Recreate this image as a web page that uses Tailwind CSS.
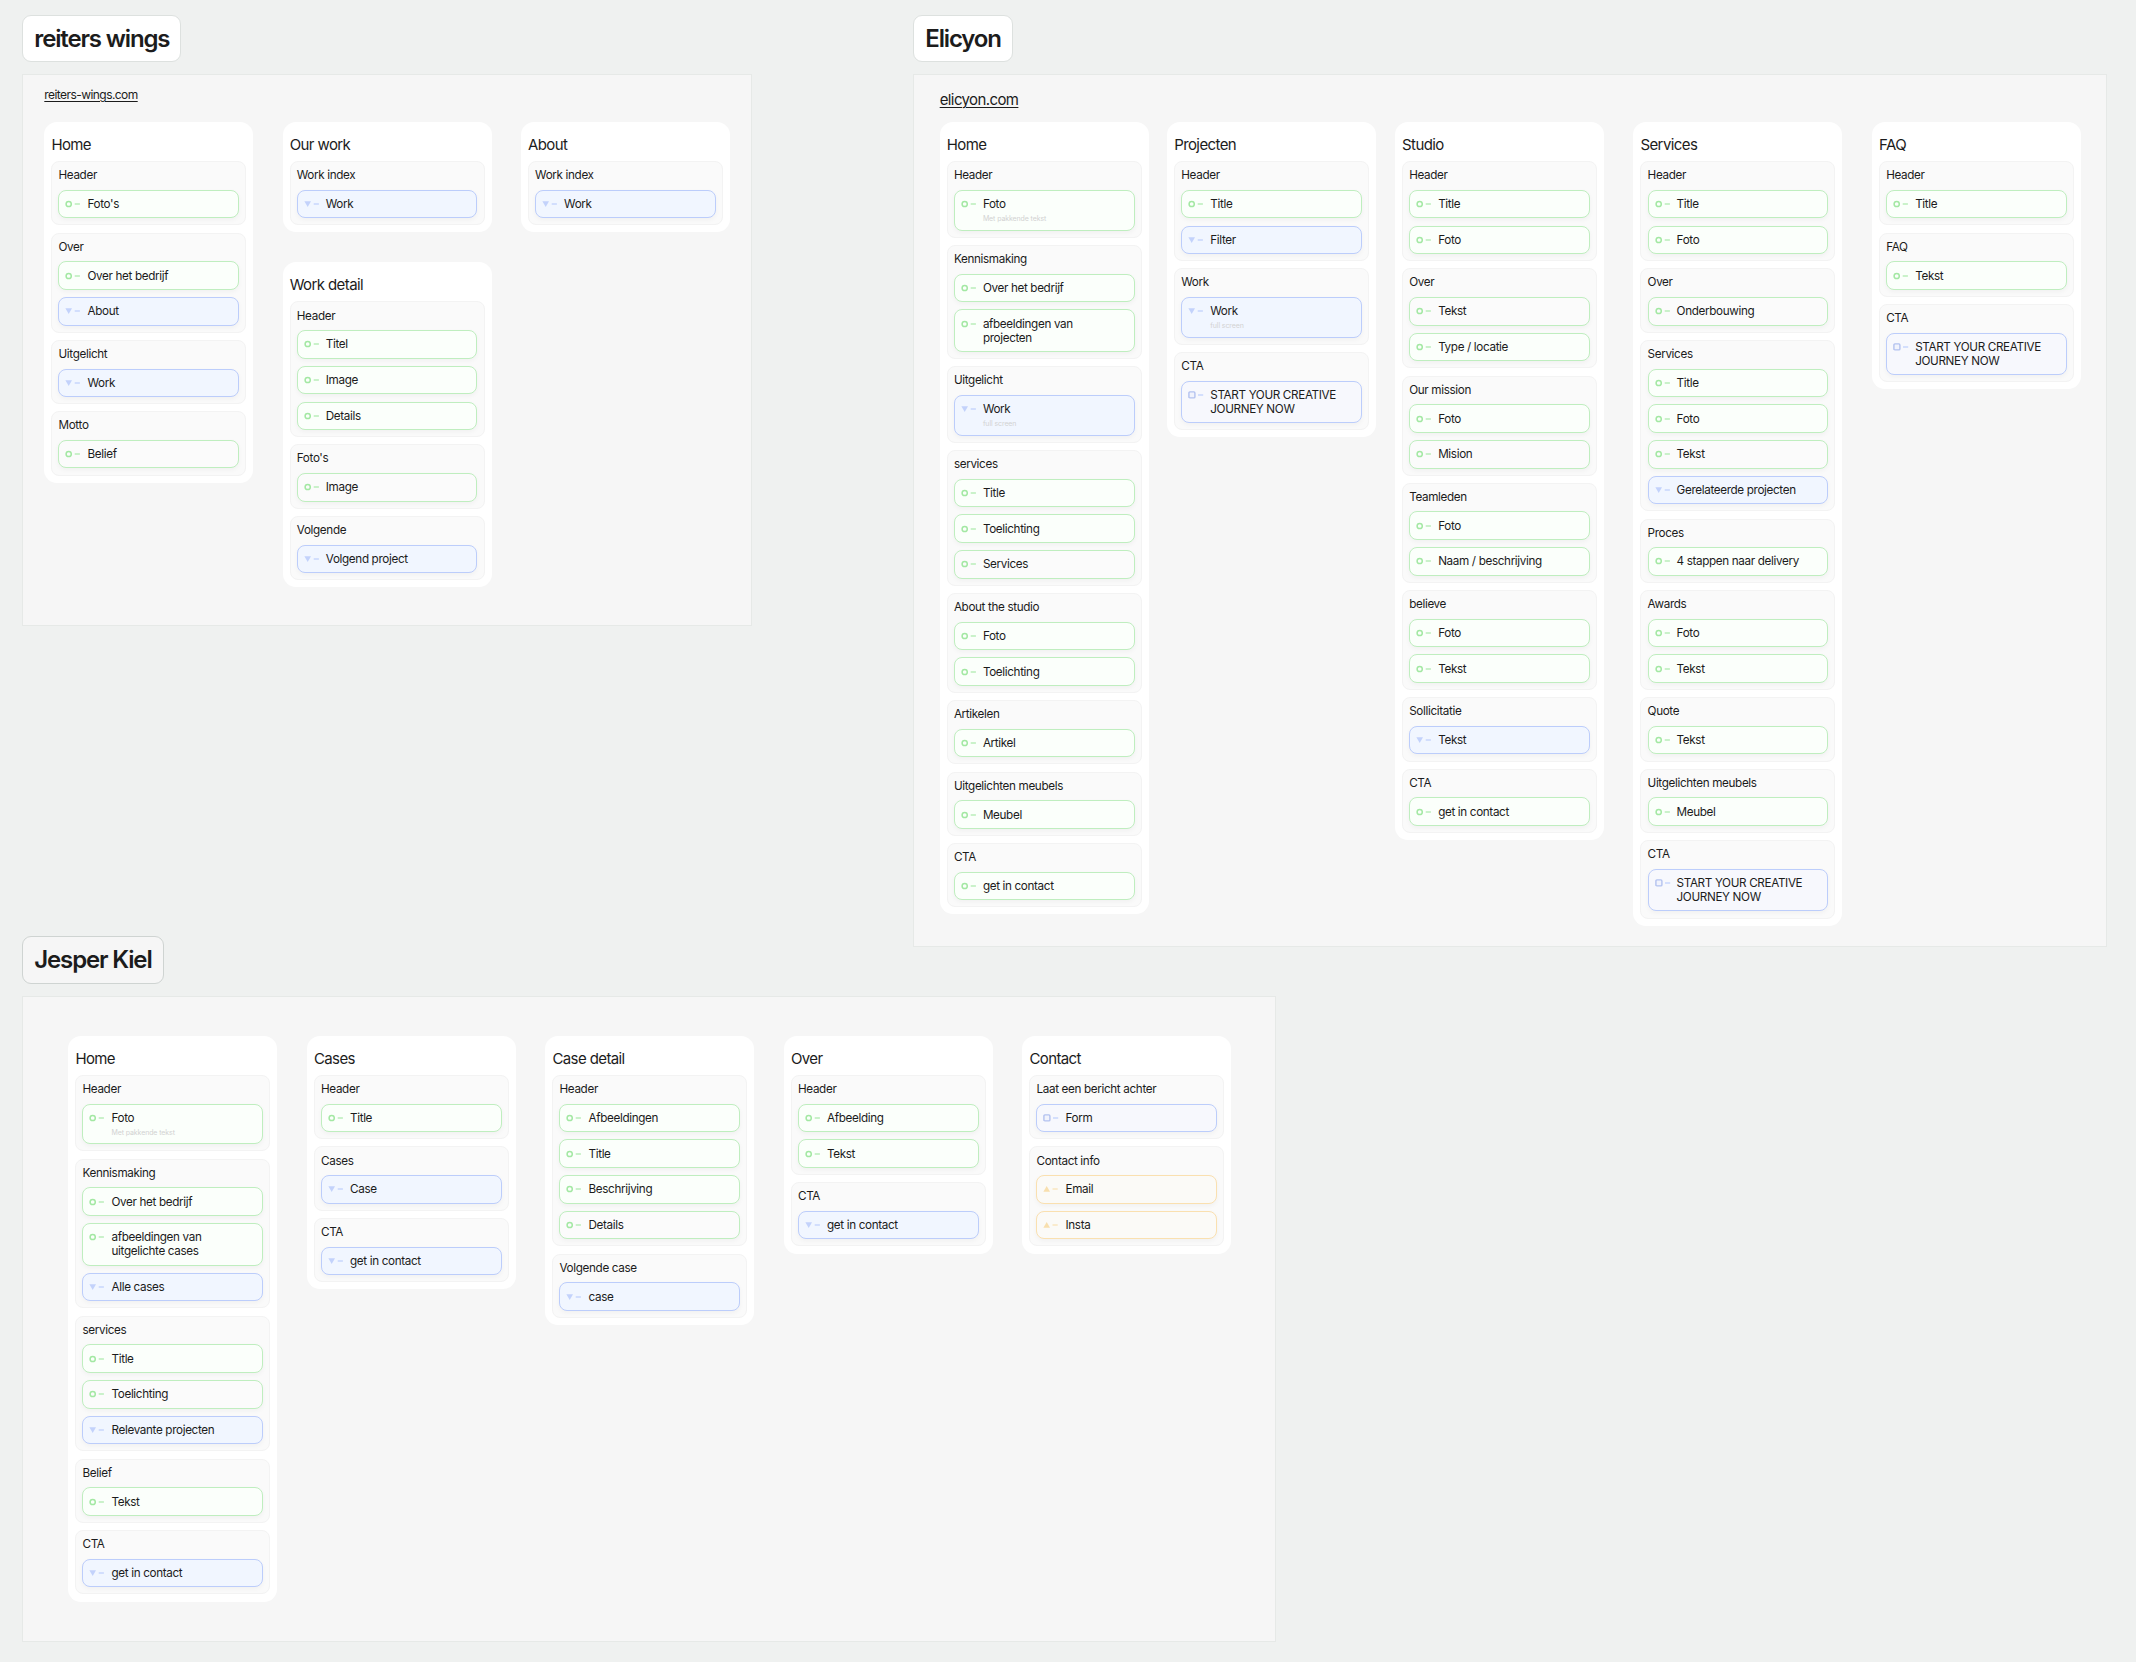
<!doctype html>
<html lang="nl">
<head>
<meta charset="utf-8">
<title>Sitemaps</title>
<script src="https://cdn.jsdelivr.net/npm/@tailwindcss/browser@4"></script>
</head>
<body class="bg-[#eff1f0] font-['Inter',sans-serif] text-[#1c1c1c]">
<div class="flex w-[2136px] h-[1662px] items-start pt-[15px] pl-[22.3px] overflow-hidden">
  <div class="flex flex-col items-start w-[891px] shrink-0">
    <h1 class="h-[47.3px] flex items-center px-[11px] bg-white border border-[#dde1df] rounded-[9px] text-[24px] tracking-[-1.15px] font-semibold leading-none">reiters wings</h1>
    <section class="mt-[12px] w-[729.5px] h-[552px] bg-[#f6f6f6] border border-[#e6e9e7] pl-[21px]">
      <div class="h-[46.5px] pt-[12.5px]"><a class="block text-[12px] tracking-[-0.56px] leading-[14.3px] underline underline-offset-2 decoration-[0.8px]">reiters-wings.com</a></div>
      <div class="flex items-start gap-[29.3px]" id="f1"></div>
    </section>
    <h1 class="mt-[310px] h-[47.3px] flex items-center px-[11px] bg-[#f6f6f6] border border-[#cfd4d2] rounded-[9px] text-[24px] tracking-[-1.15px] font-semibold leading-none">Jesper Kiel</h1>
    <section class="mt-[12px] w-[1254px] h-[646px] shrink-0 bg-[#f6f6f6] border border-[#e6e9e7] pl-[45px] pt-[39px]">
      <div class="flex items-start gap-[29.5px]" id="f3"></div>
    </section>
  </div>
  <div class="flex flex-col items-start w-[1193.4px] shrink-0">
    <h1 class="h-[47.3px] flex items-center px-[11px] bg-white border border-[#dde1df] rounded-[9px] text-[24px] tracking-[-1.15px] font-semibold leading-none">Elicyon</h1>
    <section class="mt-[12px] w-[1193.4px] h-[873px] bg-[#f6f6f6] border border-[#e6e9e7] pl-[25.4px]">
      <div class="h-[46.5px] pt-[16.5px]"><a class="block text-[15px] tracking-[-0.6px] leading-[16px] underline underline-offset-2 decoration-[0.8px]">elicyon.com</a></div>
      <div class="flex items-start" id="f2"></div>
    </section>
  </div>
</div>
<script>
const ICONS = {
  g: '<circle cx="3.7" cy="4" r="2.6" fill="none" stroke="#a3e8a3" stroke-width="1.5"/><path d="M9.7 4h5.2" stroke="#b5ecb5" stroke-width="1.4"/>',
  b: '<path d="M.4 1.2h6.6L3.7 7z" fill="#c3d2fb"/><path d="M9.7 4h5.2" stroke="#c5d4fc" stroke-width="1.4"/>',
  s: '<rect x=".9" y=".9" width="6" height="6" rx="1" fill="#f1f3fc" stroke="#b3c2ef" stroke-width="1.4"/><path d="M10 4h5.2" stroke="#c5d4fc" stroke-width="1.4"/>',
  o: '<path d="M.4 6.8h6.6L3.7 1z" fill="#f8dfae"/><path d="M9.5 4h5.2" stroke="#f9e4bb" stroke-width="1.4"/>'
};
const ITEM = {
  g: 'border-[#bfeebf] bg-[#fbfffb]',
  G: 'border-[#bfeebf] bg-[#fbfbfb]',
  b: 'border-[#bccdfb] bg-[#f1f6ff]',
  s: 'border-[#bccdfb] bg-[#f7f8fd]',
  o: 'border-[#fae0b0] bg-[#fbfaf7]'
};
function item(spec){
  const [t, label, sub] = spec;
  const icon = ICONS[t === 'G' ? 'g' : t];
  const subEl = sub ? '<div class="h-[12.3px] text-[7px] tracking-[-0.1px] leading-[16.3px] text-[#d2d2d2]">' + sub + '</div>' : '';
  return '<div class="flex items-start rounded-[8px] border pl-[6px] pr-[16px] py-[6.25px] shadow-[0_2px_5px_rgba(0,0,0,0.04)] ' + ITEM[t] + '">' +
    '<svg class="w-[22px] h-[8px] mt-[3px] shrink-0" viewBox="0 0 22 8">' + icon + '</svg>' +
    '<div class="min-w-0"><div class="text-[11.7px] tracking-[-0.35px] leading-[14px]">' + label + '</div>' + subEl + '</div></div>';
}
function section(sec){
  return '<div class="flex flex-col gap-[7.25px] p-[6.1px] rounded-[8px] border border-[#f3f3f3] bg-[#fafafa]">' +
    '<div class="text-[11.7px] tracking-[-0.35px] leading-[14.3px]">' + sec[0] + '</div>' + sec.slice(1).map(item).join('') + '</div>';
}
function card(c, extra){
  return '<div class="w-[209px] shrink-0 flex flex-col gap-[7.25px] p-[7.1px] bg-white rounded-[13px] ' + (extra || '') + '">' +
    '<div class="text-[15px] tracking-[-0.6px] leading-[31px] h-[25px]">' + c[0] + '</div>' + c.slice(1).map(section).join('') + '</div>';
}
const g = (l, s) => ['g', l, s], G = l => ['G', l], b = (l, s) => ['b', l, s], s = l => ['s', l], o = l => ['o', l];
const START = 'START YOUR CREATIVE JOURNEY NOW';

const f1 = document.getElementById('f1');
f1.innerHTML =
  card(['Home', ['Header', g("Foto's")], ['Over', g('Over het bedrijf'), b('About')], ['Uitgelicht', b('Work')], ['Motto', G('Belief')]]) +
  '<div class="flex flex-col gap-[29.6px]">' +
  card(['Our work', ['Work index', b('Work')]]) +
  card(['Work detail', ['Header', g('Titel'), g('Image'), g('Details')], ["Foto's", G('Image')], ['Volgende', b('Volgend project')]]) +
  '</div>' +
  card(['About', ['Work index', b('Work')]]);

const f2 = document.getElementById('f2');
f2.innerHTML =
  card(['Home',
    ['Header', g('Foto', 'Met pakkende tekst')],
    ['Kennismaking', g('Over het bedrijf'), g('afbeeldingen van projecten')],
    ['Uitgelicht', b('Work', 'full screen')],
    ['services', g('Title'), g('Toelichting'), G('Services')],
    ['About the studio', g('Foto'), g('Toelichting')],
    ['Artikelen', g('Artikel')],
    ['Uitgelichten meubels', g('Meubel')],
    ['CTA', g('get in contact')]]) +
  card(['Projecten',
    ['Header', g('Title'), b('Filter')],
    ['Work', b('Work', 'full screen')],
    ['CTA', s(START)]], 'ml-[18.4px]') +
  card(['Studio',
    ['Header', g('Title'), g('Foto')],
    ['Over', G('Tekst'), g('Type / locatie')],
    ['Our mission', g('Foto'), G('Mision')],
    ['Teamleden', g('Foto'), g('Naam / beschrijving')],
    ['believe', g('Foto'), g('Tekst')],
    ['Sollicitatie', b('Tekst')],
    ['CTA', g('get in contact')]], 'ml-[18.9px]') +
  card(['Services',
    ['Header', g('Title'), g('Foto')],
    ['Over', G('Onderbouwing')],
    ['Services', g('Title'), g('Foto'), G('Tekst'), b('Gerelateerde projecten')],
    ['Proces', g('4 stappen naar delivery')],
    ['Awards', g('Foto'), g('Tekst')],
    ['Quote', g('Tekst')],
    ['Uitgelichten meubels', g('Meubel')],
    ['CTA', s(START)]], 'ml-[29.4px]') +
  card(['FAQ',
    ['Header', g('Title')],
    ['FAQ', g('Tekst')],
    ['CTA', s(START)]], 'ml-[29.6px]');

const f3 = document.getElementById('f3');
f3.innerHTML =
  card(['Home',
    ['Header', g('Foto', 'Met pakkende tekst')],
    ['Kennismaking', g('Over het bedrijf'), g('afbeeldingen van uitgelichte cases'), b('Alle cases')],
    ['services', g('Title'), G('Toelichting'), b('Relevante projecten')],
    ['Belief', g('Tekst')],
    ['CTA', b('get in contact')]]) +
  card(['Cases', ['Header', g('Title')], ['Cases', b('Case')], ['CTA', b('get in contact')]]) +
  card(['Case detail', ['Header', g('Afbeeldingen'), g('Title'), g('Beschrijving'), G('Details')], ['Volgende case', b('case')]]) +
  card(['Over', ['Header', g('Afbeelding'), g('Tekst')], ['CTA', b('get in contact')]]) +
  card(['Contact', ['Laat een bericht achter', s('Form')], ['Contact info', o('Email'), o('Insta')]]);
</script>
</body>
</html>
